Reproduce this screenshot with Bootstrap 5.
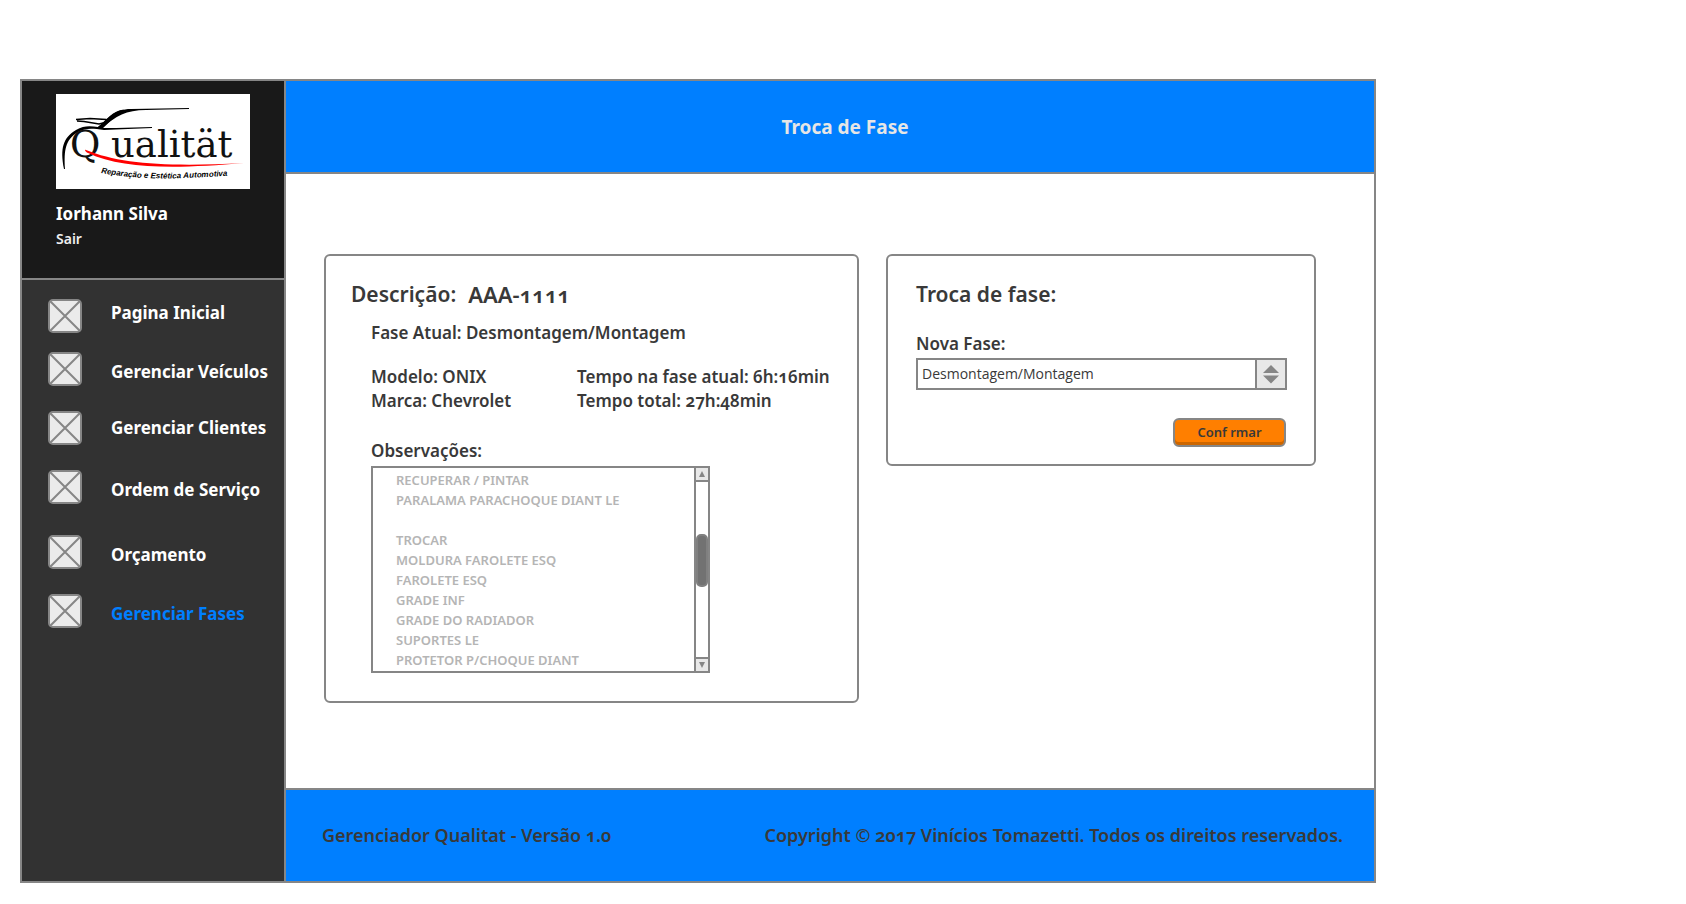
<!DOCTYPE html>
<html lang="pt-BR">
<head>
<meta charset="utf-8">
<meta name="viewport" content="width=device-width, initial-scale=1">
<title>Troca de Fase - Gerenciador Qualitat</title>
<link rel="stylesheet" href="https://cdn.jsdelivr.net/npm/bootstrap@5.3.0/dist/css/bootstrap.min.css">
<style>
:root { --line: #868686; --ink: #393939; --blue: #007fff; --soft: #e8e8e8; }
body { font-family: "Noto Sans", "Open Sans", sans-serif; font-variant-numeric: oldstyle-nums; font-size: 17px; line-height: 24px; font-weight: 600; color: var(--ink); background: #fff; }
.page { padding: 79px 310px 21px 20px; min-height: 100vh; }
.app-frame { border: 2px solid var(--line); }
.sidebar { flex: 0 0 264px; background: #323232; border-right: 2px solid var(--line); }
.profile { background: #191919; border-bottom: 2px solid var(--line); padding: 13px 34px 27px; }
.logo { width: 194px; height: 95px; background: #fff; }
.user-name { color: #fff; font-weight: 700; margin-top: 13px; }
.sign-out { color: #eee; font-size: 14px; text-decoration: none; }
.menu { padding: 19px 0 0 26px; }
.menu a { color: #fff; font-weight: 700; line-height: 28px; text-decoration: none; gap: 29px; }
.menu a.active { color: var(--blue); }
.menu svg { width: 34px; height: 34px; }
.menu li { margin-bottom: 25px; }
.menu li:first-child { margin-bottom: 19px; }
.menu li:nth-child(4) { margin-bottom: 31px; }
.bar { background: var(--blue); }
.top-bar { height: 93px; border-bottom: 2px solid var(--line); padding: 2px 0 0 30px; }
.top-bar h1 { color: #e6e6e6; font-size: 19px; font-weight: 700; margin: 0; }
.bottom-bar { height: 93px; border-top: 2px solid var(--line); font-size: 18px; padding: 0 31px 2px 36px; }
.panels { display: grid; grid-template-columns: 535fr 430fr; column-gap: 27px; align-items: start; padding: 80px 58px 60px 38px; }
.panel { border: 2px solid var(--line); border-radius: 6px; padding: 24px 25px 28px; }
.panel-side { padding: 24px 27px 17px 28px; }
.panel h2 { font-size: 21px; line-height: 28px; font-weight: 600; margin: 0; }
.panel h2.plate { font-size: 22px; }
.details { padding-left: 20px; }
.phase { margin-top: 13px; }
.facts { display: grid; grid-template-columns: 206px 1fr; margin-top: 20px; white-space: nowrap; }
.notes-label { margin-top: 26px; }
.notes { width: 339px; height: 207px; border: 2px solid var(--line); margin-top: 3px; }
.notes textarea { border: 0; outline: 0; resize: none; overflow: hidden; color: #b5b5b5; background: #fff; font-size: 13px; font-weight: 600; line-height: 20px; padding: 2px 0 0 23px; }
.scroller { width: 14px; border-left: 2px solid var(--line); }
.scroller button { height: 12px; border: 0; padding: 0; background: var(--soft); display: flex; align-items: center; justify-content: center; box-sizing: content-box; }
.scroller .up { border-bottom: 2px solid var(--line); }
.scroller .down { border-top: 2px solid var(--line); }
.scroller svg { width: 8px; height: 8px; }
.track { padding-top: 52px; }
.thumb { height: 53px; background: #727272; border: 2px solid #808080; border-radius: 5px; }
.new-phase { margin-top: 24px; }
.picker { border: 2px solid var(--line); height: 32px; margin-top: 2px; background: linear-gradient(var(--soft), var(--soft)) right / 28px 100% no-repeat; position: relative; }
.picker select { appearance: none; display: block; width: 100%; height: 28px; border: 0; outline: 0; background: transparent; padding: 0 34px 2px 4px; color: var(--ink); font: 400 14px "Open Sans", sans-serif; }
.picker svg { position: absolute; right: 0; top: 0; width: 30px; height: 28px; pointer-events: none; border-left: 2px solid var(--line); }
.btn-go { width: 113px; height: 29px; background: #ff7f00; border: 2px solid var(--line); border-radius: 6px; box-shadow: inset 0 -3px #cc6600; color: var(--ink); font-size: 13px; line-height: 16px; font-weight: 600; padding: 0 0 2px; margin: 28px 1px 0 0; }
</style>
</head>
<body>
<svg class="d-none" aria-hidden="true">
  <symbol id="box" viewBox="0 0 34 34"><rect x="1" y="1" width="32" height="32" rx="4" fill="#ebebeb" stroke="#868686" stroke-width="2"/><path d="M2 2l30 30M32 2L2 32" stroke="#868686" stroke-width="2"/></symbol>
</svg>
<div class="page d-flex">
  <div class="app-frame d-flex flex-grow-1">
    <aside class="sidebar">
      <div class="profile">
        <svg class="logo d-block" viewBox="0 0 194 95" role="img" aria-label="Qualität">
          <path d="M8 75C4 54 7 44 20 36C28 31 35 32 42 33C52 25 58 15 75 15L133 14V15L90 16C70 16 60 22 46 34L60 34L96 33V34L48 36C35 34 30 34 22 38C9 46 8 56 9 75Z" fill="#000"/>
          <path d="M42 33C52 25 56 17 68 15.500C60 20 55 27 46 35Z" fill="#000"/>
          <path d="M20 25.500L34 24.500L50 25.500L51 28L43 30L28 27.500L21 27" fill="none" stroke="#000" stroke-width="1.500"/>
          <text x="14" y="63" font-family="DejaVu Serif, serif" font-size="37" font-weight="400" fill="#111">Q</text>
          <text x="55" y="63" font-family="DejaVu Serif, serif" font-size="37" font-weight="400" fill="#111">ualität</text>
          <path d="M30 56C64 70 112 73 188 69C120 75 65 75 32 59C28 57 29 55 30 56Z" fill="#f00"/>
          <path id="arc" d="M45 79Q85 86 130 84T192 80" fill="none"/>
          <text font-family="Liberation Sans, sans-serif" font-size="8" font-weight="700" font-style="italic" fill="#000"><textPath href="#arc">Reparação e Estética Automotiva</textPath></text>
        </svg>
        <div class="user-name">Iorhann Silva</div>
        <a class="sign-out" href="#">Sair</a>
      </div>
      <nav>
        <ul class="menu list-unstyled mb-0">
          <li><a class="d-flex align-items-start" href="#"><svg><use href="#box"/></svg>Pagina Inicial</a></li>
          <li><a class="d-flex align-items-end" href="#"><svg><use href="#box"/></svg>Gerenciar Veículos</a></li>
          <li><a class="d-flex align-items-center" href="#"><svg><use href="#box"/></svg>Gerenciar Clientes</a></li>
          <li><a class="d-flex align-items-end" href="#"><svg><use href="#box"/></svg>Ordem de Serviço</a></li>
          <li><a class="d-flex align-items-end" href="#"><svg><use href="#box"/></svg>Orçamento</a></li>
          <li><a class="d-flex align-items-end active" aria-current="page" href="#"><svg><use href="#box"/></svg>Gerenciar Fases</a></li>
        </ul>
      </nav>
    </aside>
    <div class="d-flex flex-column flex-grow-1">
      <header class="bar top-bar d-flex align-items-center justify-content-center"><h1>Troca de Fase</h1></header>
      <main class="panels flex-grow-1">
        <section class="panel">
          <div class="d-flex gap-2 align-items-center"><h2>Descrição:</h2><h2 class="plate ps-1">AAA-1111</h2></div>
          <div class="details">
            <div class="phase">Fase Atual: Desmontagem/Montagem</div>
            <div class="facts">
              <div>Modelo: ONIX</div><div>Tempo na fase atual: 6h:16min</div>
              <div>Marca: Chevrolet</div><div>Tempo total: 27h:48min</div>
            </div>
            <label class="notes-label d-block" for="notes">Observações:</label>
            <div class="notes d-flex">
              <textarea id="notes" class="flex-grow-1" readonly spellcheck="false">RECUPERAR / PINTAR
PARALAMA PARACHOQUE DIANT LE

TROCAR
MOLDURA FAROLETE ESQ
FAROLETE ESQ
GRADE INF
GRADE DO RADIADOR
SUPORTES LE
PROTETOR P/CHOQUE DIANT</textarea>
              <div class="scroller d-flex flex-column">
                <button class="up" type="button" aria-label="Rolar para cima"><svg viewBox="0 0 8 8"><path d="M4 1l3 6H1z" fill="#868686"/></svg></button>
                <div class="track flex-grow-1"><div class="thumb"></div></div>
                <button class="down" type="button" aria-label="Rolar para baixo"><svg viewBox="0 0 8 8"><path d="M4 7l3-6H1z" fill="#868686"/></svg></button>
              </div>
            </div>
          </div>
        </section>
        <section class="panel panel-side">
          <h2>Troca de fase:</h2>
          <label class="new-phase d-block" for="phase">Nova Fase:</label>
          <div class="picker">
            <select id="phase"><option>Desmontagem/Montagem</option></select>
            <svg viewBox="0 0 28 28" aria-hidden="true"><path d="M6 13l8-8 8 8zM6 15.500h16l-8 8z" fill="#868686"/></svg>
          </div>
          <div class="text-end"><button class="btn-go" type="button">Conf rmar</button></div>
        </section>
      </main>
      <footer class="bar bottom-bar d-flex align-items-center justify-content-between">
        <span>Gerenciador Qualitat - Versão 1.0</span>
        <span>Copyright © 2017 Vinícios Tomazetti. Todos os direitos reservados.</span>
      </footer>
    </div>
  </div>
</div>
<script src="https://cdn.jsdelivr.net/npm/bootstrap@5.3.0/dist/js/bootstrap.bundle.min.js"></script>
</body>
</html>
